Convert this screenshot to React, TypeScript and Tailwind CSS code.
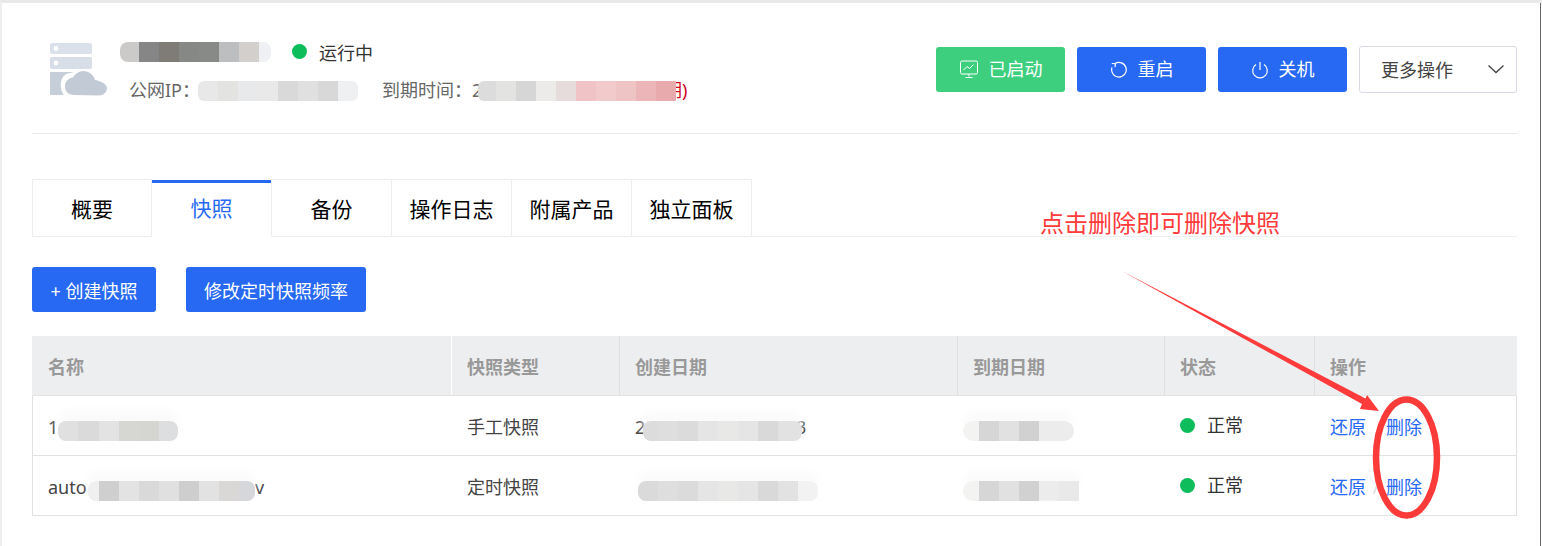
import React from "react";

type Cell = [string, number];

function Mosaic({ cells, className = "" }: { cells: Cell[]; className?: string }) {
  return (
    <span className={`relative z-10 flex h-[20px] shrink-0 overflow-hidden ${className}`}>
      {cells.map(([c, w], i) => (
        <span key={i} className="block h-full" style={{ background: c, width: w }} />
      ))}
    </span>
  );
}

function LogoIcon() {
  return (
    <svg width="58" height="53" viewBox="0 0 58 53" className="shrink-0">
      <rect x="0" y="0" width="42" height="11" rx="2" fill="#dbe1ea" />
      <circle cx="6" cy="5.5" r="2.4" fill="#fff" />
      <rect x="0" y="14" width="42" height="12" rx="2" fill="#d8dee8" />
      <circle cx="6" cy="20" r="2.4" fill="#fff" />
      <path d="M1 29h23l-8 2c-4 3-6 8-5 13 0 3 1 6 3 8H1a1 1 0 0 1-1-1V30a1 1 0 0 1 1-1z" fill="#c6ced9" />
      <path
        d="M24 52c-6 0-9-4-9-8.500 0-5 3.500-8.500 8-9 2-3.500 6-6.500 10-6.500 6 0 10.500 3.500 12 9 5 .5 12 4 12 8 0 4-3 7-8 7.500z"
        fill="#c2cad6"
      />
    </svg>
  );
}

const MonitorIcon = () => (
  <svg width="20" height="20" viewBox="0 0 20 20" fill="none" stroke="#fff" strokeWidth="1" className="shrink-0">
    <rect x="1.500" y="1" width="17" height="13" rx="1.500" />
    <path d="M4.500 10l3.500-3.500 2.500 2 4-4" />
    <path d="M10 14v2.500M6.500 17.500h7" />
  </svg>
);

const RestartIcon = () => (
  <svg width="18" height="18" viewBox="0 0 18 18" fill="none" stroke="#fff" strokeWidth="1.200" className="shrink-0">
    <path d="M5 2.600A7.300 7.300 0 1 1 2 6.500" />
    <path d="M1.800 2.500l3.600.200-.4 3.400" />
  </svg>
);

const PowerIcon = () => (
  <svg width="18" height="18" viewBox="0 0 18 18" fill="none" stroke="#fff" strokeWidth="1.200" className="shrink-0">
    <path d="M9 1v8" />
    <path d="M5 3.500a7.300 7.300 0 1 0 8 0" />
  </svg>
);

function ActionButton({
  color,
  icon,
  label,
}: {
  color: string;
  icon: React.ReactNode;
  label: string;
}) {
  return (
    <button className={`flex h-[45px] w-[129px] items-center justify-center gap-[10px] rounded-[3px] text-[18px] text-white ${color}`}>
      {icon}
      <span>{label}</span>
    </button>
  );
}

const tabs = ["概要", "快照", "备份", "操作日志", "附属产品", "独立面板"];

const cols = "grid grid-cols-[419px_168px_338px_207px_150px_201px]";
const headers = ["名称", "快照类型", "创建日期", "到期日期", "状态", "操作"];

function StatusCell() {
  return (
    <div className="flex items-center pl-[15px]">
      <span className="h-[15px] w-[15px] rounded-full bg-[#0dbc5b]" />
      <span className="ml-[12px] text-[#333]">正常</span>
    </div>
  );
}

function OpsCell({ slash }: { slash?: boolean }) {
  return (
    <div className="flex items-center pl-[15px] pt-[4px] text-[#2769f3]">
      <span>还原</span>
      <span className="flex w-[20px] justify-center text-[#ddd]">{slash ? "/" : ""}</span>
      <span>删除</span>
    </div>
  );
}

export default function App() {
  return (
    <div
      className="relative h-[546px] w-[1542px] overflow-hidden border-t-[3px] border-l-2 border-t-[#e9e9e9] border-l-[#eeeeee] bg-white"
      style={{ fontFamily: '"Noto Sans", "Noto Sans CJK SC", sans-serif' }}
    >
      <div className="absolute -top-[3px] left-0 h-px w-full bg-[#444]" />
      <div className="absolute top-0 right-[1px] h-full w-px bg-[#666]" />

      <main className="pr-[25px] pl-[30px]">
        {/* Header */}
        <header className="flex h-[131px] justify-between border-b border-[#e8e8e8] pt-[38px]">
          <div className="flex pl-[18px]">
            <div className="pt-[2px]">
              <LogoIcon />
            </div>
            <div className="ml-[12px]">
              <div className="flex h-[21px] items-center">
                <Mosaic
                  className="rounded-l-[8px] rounded-r-[8px]"
                  cells={[
                    ["#cbcac8", 19],
                    ["#868686", 20],
                    ["#7f7b77", 20],
                    ["#868886", 20],
                    ["#888a87", 20],
                    ["#bdbebf", 20],
                    ["#d2cfcc", 20],
                    ["#eef0f3", 12],
                  ]}
                />
                <span className="ml-[21px] h-[15px] w-[15px] rounded-full bg-[#0dbc5b]" />
                <span className="ml-[12px] pt-[4px] text-[18px] leading-[21px] text-[#333]">运行中</span>
              </div>
              <div className="mt-[19px] ml-[9px] flex h-[20px] items-center text-[18px] text-[#666]">
                <span className="-mt-[2px] w-[69px] whitespace-nowrap">公网IP：</span>
                <Mosaic
                  className="rounded-[6px]"
                  cells={[
                    ["#e8e8e8", 20],
                    ["#e3e3e1", 20],
                    ["#e8e9ea", 20],
                    ["#e9e9e9", 20],
                    ["#d9d9d9", 20],
                    ["#dfe0df", 20],
                    ["#d8d8d8", 20],
                    ["#eff0f2", 20],
                  ]}
                />
                <span className="-mt-[2px] ml-[24px] w-[96px] whitespace-nowrap">到期时间：2</span>
                <Mosaic
                  className="rounded-l-[6px]"
                  cells={[
                    ["#dcdcdc", 18],
                    ["#e3e3e2", 20],
                    ["#d6d6d6", 20],
                    ["#ecebe9", 20],
                    ["#e6dcdc", 20],
                    ["#f0c4c6", 20],
                    ["#f2cacb", 20],
                    ["#efc4c5", 20],
                    ["#ecb5b7", 20],
                    ["#e9aaad", 20],
                  ]}
                />
                <span className="-mt-[2px] -ml-[12px] whitespace-nowrap text-[#d0021b]">期)</span>
              </div>
            </div>
          </div>
          <div className="mt-[5px] flex h-[46px] items-center gap-[12px] pt-[1px]">
            <ActionButton color="bg-[#3ecf7e]" icon={<MonitorIcon />} label="已启动" />
            <ActionButton color="bg-[#2769f3]" icon={<RestartIcon />} label="重启" />
            <ActionButton color="bg-[#2769f3]" icon={<PowerIcon />} label="关机" />
            <button className="-mt-[1px] flex h-[47px] w-[158px] items-center justify-between rounded-[3px] border border-[#d8dbe4] pr-[11px] pl-[21px] text-[18px] text-[#444]">
              <span className="pt-[2px]">更多操作</span>
              <svg width="18" height="18" viewBox="0 0 18 18" fill="none" stroke="#444" strokeWidth="1.300">
                <path d="M1.500 5.500L9 12.500l7.500-7" />
              </svg>
            </button>
          </div>
        </header>

        {/* Tabs */}
        <div className="mt-[45px] flex h-[58px] border-b border-[#eeeeee]">
          {tabs.map((t, i) => (
            <div
              key={t}
              className={`flex h-[58px] w-[120px] items-center justify-center border-t border-r border-[#eeeeee] pt-[2px] text-[21px] ${
                i === 0 ? "border-l" : ""
              } ${
                i === 1
                  ? "border-b border-t-white border-b-white text-[#2769f3] shadow-[inset_0_3px_0_#2769f3]"
                  : "text-black"
              }`}
            >
              {t}
            </div>
          ))}
        </div>

        {/* Buttons */}
        <div className="mt-[30px] flex gap-[30px]">
          <button className="h-[45px] w-[124px] rounded-[3px] bg-[#2769f3] pt-[3px] text-[18px] text-white">+ 创建快照</button>
          <button className="h-[45px] w-[180px] rounded-[3px] bg-[#2769f3] pt-[3px] text-[18px] text-white">修改定时快照频率</button>
        </div>

        {/* Table */}
        <div className="mt-[24px] text-[18px] text-[#444]">
          <div className={`${cols} h-[60px] border-x border-b border-x-[#edeef0] border-b-[#e2e2e2] bg-[#edeef0] font-bold text-[#999]`}>
            {headers.map((h, i) => (
              <div
                key={h}
                className={`flex items-center pt-[3px] pl-[15px] ${
                  i === 0 ? "border-r border-white" : i < 5 ? "border-r border-[#dfe0e3]" : ""
                }`}
              >
                {h}
              </div>
            ))}
          </div>

          <div className={`${cols} h-[60px] border-x border-b border-[#e2e2e2]`}>
            <div className="flex items-center pl-[15px]">
              <span className="w-[10px] pt-[3px]">1</span>
              <Mosaic
                className="mt-[10px] rounded-[8px] shadow-[0_-10px_12px_#fafafa]"
                cells={[
                  ["#e0e0e0", 20],
                  ["#dadada", 21],
                  ["#e3e3e3", 20],
                  ["#d6d6d3", 20],
                  ["#d5d5d2", 20],
                  ["#dcdee0", 19],
                ]}
              />
            </div>
            <div className="flex items-center pt-[3px] pl-[15px]">手工快照</div>
            <div className="flex items-center pl-[15px]">
              <span className="w-[8px] pt-[3px]">2</span>
              <Mosaic
                className="mt-[10px] rounded-[8px] shadow-[0_-10px_8px_#fbfbfb]"
                cells={[
                  ["#dcdcdc", 15],
                  ["#dedede", 20],
                  ["#dbdbdb", 20],
                  ["#e5e5e5", 20],
                  ["#e8e8e6", 20],
                  ["#e5e5e5", 20],
                  ["#d9d9d9", 20],
                  ["#e2e2e2", 24],
                ]}
              />
              <span className="-ml-[6px] pt-[3px] text-[#444]">3</span>
            </div>
            <div className="flex items-center pl-[5px]">
              <Mosaic
                className="mt-[10px] rounded-[10px] shadow-[0_-10px_8px_#fbfbfb]"
                cells={[
                  ["#f3f3f2", 16],
                  ["#d6d6d6", 20],
                  ["#e0e1e0", 20],
                  ["#d1d1d1", 20],
                  ["#ececec", 20],
                  ["#ececec", 15],
                ]}
              />
            </div>
            <StatusCell />
            <OpsCell />
          </div>

          <div className={`${cols} h-[60px] border-x border-b border-[#e2e2e2]`}>
            <div className="flex items-center pl-[15px]">
              <span className="w-[40px] pt-[3px]">auto</span>
              <Mosaic
                className="mt-[10px] rounded-[8px] shadow-[0_-10px_10px_#fbfbfb]"
                cells={[
                  ["#f0f0f0", 11],
                  ["#cfcfcf", 20],
                  ["#e3e3e3", 20],
                  ["#d9d9d9", 20],
                  ["#e0e0e0", 20],
                  ["#cecece", 20],
                  ["#e2e2e2", 20],
                  ["#d9d8d6", 20],
                  ["#d5d7da", 16],
                ]}
              />
              <span className="pt-[3px]">v</span>
            </div>
            <div className="flex items-center pt-[3px] pl-[15px]">定时快照</div>
            <div className="flex items-center pl-[18px]">
              <Mosaic
                className="mt-[10px] rounded-[8px] shadow-[0_-10px_8px_#fbfbfb]"
                cells={[
                  ["#dadada", 20],
                  ["#dedede", 20],
                  ["#dbdbdb", 20],
                  ["#e5e5e5", 20],
                  ["#e8e8e6", 20],
                  ["#e5e5e5", 20],
                  ["#d9d9d9", 20],
                  ["#e2e2e2", 20],
                  ["#f2f2f2", 20],
                ]}
              />
            </div>
            <div className="flex items-center pl-[5px]">
              <Mosaic
                className="mt-[10px] rounded-l-[10px] shadow-[0_-10px_8px_#fbfbfb]"
                cells={[
                  ["#f3f3f2", 16],
                  ["#d6d6d6", 20],
                  ["#e0e1e0", 20],
                  ["#d1d1d1", 20],
                  ["#ececec", 20],
                  ["#e9e9e9", 20],
                ]}
              />
            </div>
            <StatusCell />
            <OpsCell slash />
          </div>
        </div>
      </main>

      {/* Annotation overlay */}
      <div className="absolute top-[203px] left-[1038px] z-20 text-[24px] leading-[34px] whitespace-nowrap text-[#ff3b3b]">
        点击删除即可删除快照
      </div>
      <svg className="pointer-events-none absolute -top-[3px] -left-[2px] z-20" width="1542" height="546" viewBox="0 0 1542 546" fill="none">
        <polygon points="1121,270.500 1365.500,398.500 1367,395 1379,411 1360,409 1362,404" fill="#ff3b3b" />
        <ellipse cx="1406.500" cy="457.500" rx="30.500" ry="58" stroke="#fb3a3a" strokeWidth="6.500" />
      </svg>
    </div>
  );
}
